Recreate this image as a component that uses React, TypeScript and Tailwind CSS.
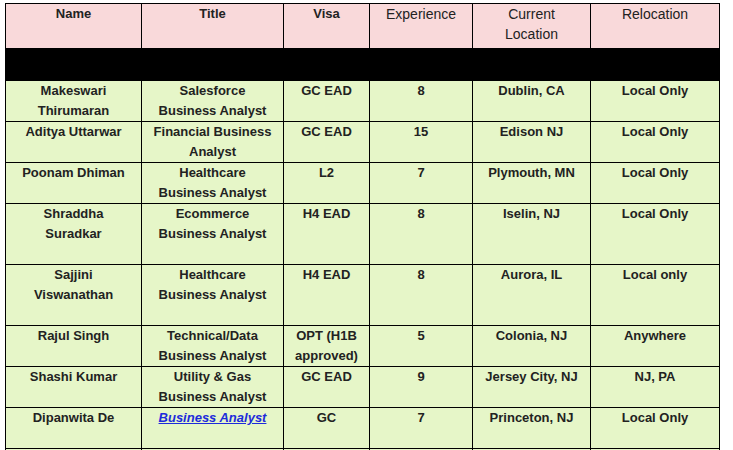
const rows = [
  { name: "Makeswari Thirumaran", title: "Salesforce Business Analyst", visa: "GC EAD", exp: "8", loc: "Dublin, CA", reloc: "Local Only", h: "h-[41px]" },
  { name: "Aditya Uttarwar", title: "Financial Business Analyst", visa: "GC EAD", exp: "15", loc: "Edison NJ", reloc: "Local Only", h: "h-[41px]" },
  { name: "Poonam Dhiman", title: "Healthcare Business Analyst", visa: "L2", exp: "7", loc: "Plymouth, MN", reloc: "Local Only", h: "h-[40px]" },
  { name: "Shraddha Suradkar", title: "Ecommerce Business Analyst", visa: "H4 EAD", exp: "8", loc: "Iselin, NJ", reloc: "Local Only", h: "h-[61px]" },
  { name: "Sajjini Viswanathan", title: "Healthcare Business Analyst", visa: "H4 EAD", exp: "8", loc: "Aurora, IL", reloc: "Local only", h: "h-[61px]" },
  { name: "Rajul Singh", title: "Technical/Data Business Analyst", visa: "OPT (H1B approved)", exp: "5", loc: "Colonia, NJ", reloc: "Anywhere", h: "h-[41px]" },
  { name: "Shashi Kumar", title: "Utility & Gas Business Analyst", visa: "GC EAD", exp: "9", loc: "Jersey City, NJ", reloc: "NJ, PA", h: "h-[41px]" },
  { name: "Dipanwita De", title: "", visa: "GC", exp: "7", loc: "Princeton, NJ", reloc: "Local Only", h: "h-[41px]" },
];

const cell = "border border-black align-top text-center px-[9px] py-0";
const bold = " font-bold text-[13px]";
const light = " font-normal text-[14px]";

export default function App() {
  return (
    <div className="bg-white pl-[5px] pt-[3px] h-[450px] overflow-hidden">
      <table
        className="border-collapse table-fixed w-[714px] leading-[20px] text-[#222]"
        style={{ fontFamily: '"Liberation Sans", Arial, sans-serif' }}
      >
        <colgroup>
          <col className="w-[136px]" />
          <col className="w-[142px]" />
          <col className="w-[86px]" />
          <col className="w-[103px]" />
          <col className="w-[118px]" />
          <col className="w-[129px]" />
        </colgroup>
        <thead>
          <tr className="h-[45px] bg-[#f9d9da]">
            <th className={cell + bold}>Name</th>
            <th className={cell + bold}>Title</th>
            <th className={cell + bold}>Visa</th>
            <th className={cell + light}>Experience</th>
            <th className={cell + light}>Current Location</th>
            <th className={cell + light}>Relocation</th>
          </tr>
        </thead>
        <tbody className="bg-[#e6f6c8]">
          <tr className="h-[32px] bg-black">
            <td className="border border-black" colSpan={6}></td>
          </tr>
          {rows.map((r) => (
            <tr key={r.name} className={r.h}>
              <td className={cell + bold}>{r.name}</td>
              <td className={cell + bold}>
                {r.title ? (
                  r.title
                ) : (
                  <a href="#" className="italic underline text-[#1d2bdb]">
                    Business Analyst
                  </a>
                )}
              </td>
              <td className={cell + bold}>{r.visa}</td>
              <td className={cell + bold}>{r.exp}</td>
              <td className={cell + bold}>{r.loc}</td>
              <td className={cell + bold}>{r.reloc}</td>
            </tr>
          ))}
          <tr className="h-[41px]">
            <td className={cell}></td>
            <td className={cell}></td>
            <td className={cell}></td>
            <td className={cell}></td>
            <td className={cell}></td>
            <td className={cell}></td>
          </tr>
        </tbody>
      </table>
    </div>
  );
}
